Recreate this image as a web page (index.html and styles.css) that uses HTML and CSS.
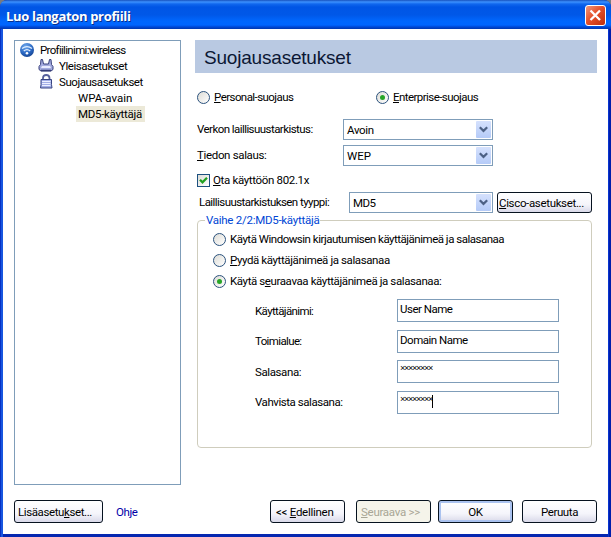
FILE: index.html
```html
<!DOCTYPE html>
<html lang="fi">
<head>
<meta charset="utf-8">
<title>Luo langaton profiili</title>
<link rel="stylesheet" href="styles.css">
</head>
<body>
<div class="window">
  <header class="titlebar">
    <h1>Luo langaton profiili</h1>
    <button class="close" aria-label="Sulje"><svg width="21" height="21" viewBox="0 0 21 21"><path d="M5.5 5.5 15 15M15 5.5 5.5 15" stroke="#fff" stroke-width="2.3"/></svg></button>
  </header>
  <div class="client">
    <main class="columns">
      <nav class="tree">
        <div class="node root">
          <svg width="16" height="16" viewBox="0 0 16 16"><defs><radialGradient id="ball" cx=".4" cy=".25" r=".8"><stop offset="0" stop-color="#6fa8ec"/><stop offset=".6" stop-color="#2b69c4"/><stop offset="1" stop-color="#123f8c"/></radialGradient></defs><circle cx="8" cy="8" r="7" fill="url(#ball)"/><path d="M3 6.600q5-4 10 0M4.800 9q3.200-2.700 6.400 0" fill="none" stroke="#dcecff" stroke-width="1.300"/><circle cx="8" cy="11.300" r="1.300" fill="#fff"/></svg>
          <span class="label l-root">Profiilinimi:wireless</span>
        </div>
        <div class="node child">
          <svg width="16" height="16" viewBox="0 0 16 16"><path d="M3 1.500h1.500l1 4.500h5l1-4.500H13l.5 5 1.500 2v3l-2 1.500H3l-2-1.500V8.500l1.500-2z" fill="#a4abdf" stroke="#39417c"/><path d="M4 8h8l1 2H3z" fill="#e8ebff"/><path d="M3 12.500h10" stroke="#343c78" stroke-width="1.500"/></svg>
          <span class="label l-gen">Yleisasetukset</span>
        </div>
        <div class="node child">
          <svg width="16" height="16" viewBox="0 0 16 16"><path d="M5 6V4Q5 1 8.200 1T11.500 4V6" fill="none" stroke="#56609c" stroke-width="1.800"/><path d="M3 5.500h10.500v5l.5 3.500H2.500l.5-3.500z" fill="#a3afe6" stroke="#394583"/><path d="M4 7.500h8.500M4 9.500h8.500M4 11.500h8.500" stroke="#edf0ff"/></svg>
          <span class="label l-sec">Suojausasetukset</span>
        </div>
        <div class="node leaf"><span class="label l-wpa">WPA-avain</span></div>
        <div class="node leaf"><span class="label selected">MD5-käyttäjä</span></div>
      </nav>
      <section class="panel">
        <h2>Suojausasetukset</h2>
        <div class="modes">
          <div class="option"><i class="radio"></i><span class="l-personal"><u>P</u>ersonal-suojaus</span></div>
          <div class="option"><i class="radio on"></i><span class="l-enterprise"><u>E</u>nterprise-suojaus</span></div>
        </div>
        <div class="row first"><span class="caption l-auth">Verkon laillisuustarkistus:</span><div class="select"><span class="l-open">Avoin</span><b><svg width="9" height="7" viewBox="0 0 9 7"><path d="m.8 1.200 3.700 3.700 3.700-3.700" fill="none" stroke="#4d6185" stroke-width="2.200"/></svg></b></div></div>
        <div class="row"><span class="caption l-enc"><u>T</u>iedon salaus:</span><div class="select"><span class="l-wep">WEP</span><b><svg width="9" height="7" viewBox="0 0 9 7"><path d="m.8 1.200 3.700 3.700 3.700-3.700" fill="none" stroke="#4d6185" stroke-width="2.200"/></svg></b></div></div>
        <div class="enable"><i class="check"><svg width="11" height="11" viewBox="0 0 11 11"><path d="m2 4.700 2.500 2.600L9 2.800" fill="none" stroke="#21a121" stroke-width="2.300"/></svg></i><span class="l-8021x"><u>O</u>ta käyttöön 802.1x</span></div>
        <div class="row type"><span class="caption l-type">Laillisuustarkistuksen tyyppi:</span><div class="select"><span class="l-md5">MD5</span><b><svg width="9" height="7" viewBox="0 0 9 7"><path d="m.8 1.200 3.700 3.700 3.700-3.700" fill="none" stroke="#4d6185" stroke-width="2.200"/></svg></b></div><button class="btn cisco"><span class="l-cisco"><u>C</u>isco-asetukset...</span></button></div>
        <fieldset>
          <legend><span class="l-step">Vaihe 2/2:MD5-käyttäjä</span></legend>
          <div class="option"><i class="radio"></i><span class="l-win">Käytä Windowsin kirjautumisen käyttäjänimeä ja salasanaa</span></div>
          <div class="option"><i class="radio"></i><span class="l-ask"><u>P</u>yydä käyttäjänimeä ja salasanaa</span></div>
          <div class="option"><i class="radio on"></i><span class="l-use">Käytä s<u>e</u>uraavaa käyttäjänimeä ja salasanaa:</span></div>
          <div class="credentials">
            <span class="l-user">Käyttäjänimi:</span><div class="field"><span class="l-uname">User Name</span></div>
            <span class="l-domain">Toimialue:</span><div class="field"><span class="l-dname">Domain Name</span></div>
            <span class="l-pass">Salasana:</span><div class="field"><span class="stars">××××××××</span></div>
            <span class="l-confirm">Vahvista salasana:</span><div class="field"><span class="stars">××××××××</span><i class="caret"></i></div>
          </div>
        </fieldset>
      </section>
    </main>
    <footer>
      <button class="btn advanced"><span class="l-adv">Lisäasetu<u>k</u>set...</span></button>
      <a class="help">Ohje</a>
      <button class="btn back"><span class="l-back">&lt;&lt; <u>E</u>dellinen</span></button>
      <button class="btn next" disabled><span class="l-next"><u>S</u>euraava &gt;&gt;</span></button>
      <button class="btn ok">OK</button>
      <button class="btn cancel"><span class="l-cancel">Peruuta</span></button>
    </footer>
  </div>
</div>
</body>
</html>
```
FILE: styles.css
```css
* { box-sizing: border-box; }
body { margin: 0; background: #777b80; font: 11.5px/16px Roboto, "Liberation Sans", sans-serif; letter-spacing: -.4px; color: #000; }
span, a { white-space: nowrap; }
svg { display: block; flex: none; }
u { text-underline-offset: 1px; text-decoration-thickness: 1px; }
button { font: inherit; letter-spacing: inherit; color: inherit; padding: 0; margin: 0; }
.window { width: 611px; height: 537px; padding: 0 3px 3px; border-radius: 7px 7px 0 0; overflow: hidden; background: linear-gradient(90deg, #0831c4 0 1px, #1756e0 1px 3px, #0527b0 3px 608px, #0734d0 608px 609px, #001eaa 609px); }
.titlebar { height: 29px; margin: 0 -3px; padding: 0 5px 0 6px; display: flex; align-items: center; justify-content: space-between; background: linear-gradient(#1752bd 0, #3c91ff 2px, #1067ee 4px, #0055e5 7px, #0058e8 15px, #0067fd 21px, #0066ff 25px, #0048d5 27px, #0037ae 29px); }
h1 { margin: 2px 0 0; font: bold 13px/18px "Open Sans", sans-serif; letter-spacing: -.33px; font-variant-ligatures: none; color: #fff; text-shadow: 1px 1px #08318e; }
.close { width: 21px; height: 21px; margin-top: 2px; border: 1px solid #fff; border-radius: 3px; background: linear-gradient(135deg, #ee987e, #e5512b 45%, #bd2d0b); display: flex; align-items: center; justify-content: center; }
.client { height: 505px; padding: 11px 11px 0; background: #fff; }
.columns { display: flex; gap: 14px; height: 446px; }
.tree { width: 167px; height: 445px; padding-top: 1px; border: 1px solid #7f9db9; flex: none; }
.node { display: flex; height: 16px; align-items: center; gap: 3px; }
.root { padding-left: 4px; }
.child { padding-left: 23px; }
.leaf { padding-left: 61px; }
.label { line-height: 16px; padding: 0 2px; }
.selected { background: #ece9d8; letter-spacing: -.3px; padding-right: 3px; }
.panel { width: 402px; }
h2 { height: 33px; margin: 0; padding-left: 9px; font: 19px/35px "Liberation Sans", sans-serif; letter-spacing: -.2px; background: #b9c9e2; color: #0b1734; }
.modes { display: grid; grid-template-columns: 179px 1fr; padding: 16px 0 0 2px; }
.option { display: flex; align-items: center; gap: 4px; height: 16px; }
.radio { width: 13px; height: 13px; flex: none; border: 1px solid #2b527d; border-radius: 50%; background: linear-gradient(135deg, #dddcd6, #fff); display: flex; align-items: center; justify-content: center; }
.radio.on::after { content: ""; width: 5px; height: 5px; border-radius: 50%; background: #27a527; }
.row { display: flex; align-items: center; height: 21px; padding-left: 2px; margin-top: 5px; }
.row.first { margin-top: 14px; }
.caption { width: 146px; flex: none; }
.row .caption { margin-top: -2px; }
.type .caption { width: 152px; padding-left: 2px; }
.select { width: 150px; height: 21px; padding: 0 1px 0 3px; border: 1px solid #7f9db9; background: #fff; display: flex; align-items: center; justify-content: space-between; }
.type .select { width: 144px; margin-right: 4px; }
.select b { width: 15px; height: 17px; border-radius: 1px; background: linear-gradient(#d5e1fd, #b5cbf8); display: flex; align-items: center; justify-content: center; }
.enable { display: flex; align-items: center; gap: 3px; height: 16px; margin: 6px 0 4px; padding-left: 2px; }
.check { width: 13px; height: 13px; border: 1px solid #1c5180; background: linear-gradient(135deg, #dcdcd7, #fff); }
.row.type { margin-top: 0; }
.btn { height: 23px; border: 1px solid #06121f; border-radius: 3px; background: linear-gradient(#fff, #f5f5fb 60%, #d9d9e9); display: flex; align-items: center; justify-content: center; flex: none; }
.btn.cisco { width: 95px; height: 21px; justify-content: flex-start; padding-left: 1px; }
fieldset { width: 395px; height: 235px; margin: 0 0 0 2px; padding: 3px 0 0 15px; border: 1px solid #cfcdbd; border-radius: 4px; }
legend { margin-left: -8px; padding: 0 1px; height: 15px; line-height: 15px; color: #0046d5; }
fieldset .option { margin-bottom: 5px; }
.credentials { display: grid; grid-template-columns: 142px 162px; row-gap: 7.67px; padding: 5px 0 0 42px; align-items: center; }
.field { height: 23px; border: 1px solid #7f9db9; padding: 1px 0 0 2px; display: flex; align-items: flex-start; }
.stars { font: 9px/14px "Liberation Mono", monospace; letter-spacing: -1.4px; }
.caret { width: 1px; height: 13px; margin-top: 2px; background: #000; }
footer { display: flex; align-items: center; padding-top: 14px; }
.advanced, .back, .next { justify-content: flex-start; }
.advanced { width: 89px; padding-left: 3px; }
.help { width: 167px; padding-left: 13px; color: #0000a8; }
.back { width: 75px; margin: 0 11px 0 0; padding-left: 5px; }
.next { width: 75px; margin-right: 7px; padding-left: 4px; background: #f5f4ea; color: #a8a695; }
.ok { width: 75px; margin-right: 9px; box-shadow: inset 0 0 0 2px #aac2ef; }
.cancel { width: 75px; }

/* per-text tracking */
.l-root { letter-spacing: -.68px; }
.l-gen, .l-sec, .l-confirm { letter-spacing: -.45px; }
.l-wpa, .l-wep { letter-spacing: 0; }
.l-personal, .l-enterprise, .l-auth, .l-type { letter-spacing: -.56px; }
.l-enc, .l-8021x, .l-cisco, .l-open { letter-spacing: -.34px; }
.l-step, .l-next, .l-back { letter-spacing: -.27px; }
.l-adv { letter-spacing: -.4px; }
.l-win, .l-uname, .l-dname, .l-md5 { letter-spacing: -.49px; }
.l-user, .l-domain { letter-spacing: -.63px; }
```
